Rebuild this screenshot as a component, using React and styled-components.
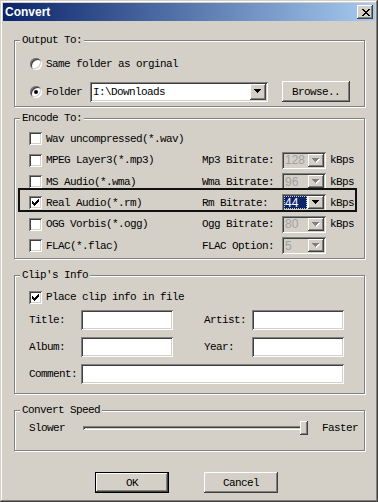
import React from "react"
import styled, { createGlobalStyle } from "styled-components"

const GlobalStyle = createGlobalStyle`
  html, body {
    margin: 0;
    padding: 0;
    background: #d4d0c8;
  }
  body {
    font-family: "Liberation Mono", "DejaVu Sans Mono", monospace;
    font-size: 11px;
    letter-spacing: -0.6px;
    color: #000;
  }
  * { box-sizing: border-box; }
`

const raised = `
  box-shadow: inset -1px -1px 0 #404040, inset 1px 1px 0 #fff,
    inset -2px -2px 0 #808080, inset 2px 2px 0 #d4d0c8;
`
const sunken = `
  box-shadow: inset 1px 1px 0 #808080, inset -1px -1px 0 #fff,
    inset 2px 2px 0 #404040, inset -2px -2px 0 #d4d0c8;
`

const formats = [
    { label: "Wav uncompressed(*.wav)", h: 21 },
    { label: "MPEG Layer3(*.mp3)", option: "Mp3 Bitrate:", value: "128", unit: "kBps", h: 22 },
    { label: "MS Audio(*.wma)", option: "Wma Bitrate:", value: "96", unit: "kBps", h: 21 },
    { label: "Real Audio(*.rm)", option: "Rm Bitrate:", value: "44", unit: "kBps", checked: true, h: 21 },
    { label: "OGG Vorbis(*.ogg)", option: "Ogg Bitrate:", value: "80", unit: "kBps", h: 22 },
    { label: "FLAC(*.flac)", option: "FLAC Option:", value: "5", h: 21 },
]

const CheckMark = () => (
    <svg width="7" height="7" viewBox="0 0 7 7" shapeRendering="crispEdges">
        <path d="M6 0h1v1h-1z M5 1h2v1h-2z M0 2h1v1h-1z M4 2h3v1h-3z M0 3h2v1h-2z M3 3h3v1h-3z M0 4h5v1h-5z M1 5h3v1h-3z M2 6h1v1h-1z" fill="#000" />
    </svg>
)

const Arrow = ({ disabled }) => (
    <svg width="8" height="5" viewBox="0 0 8 5" shapeRendering="crispEdges">
        {disabled && <path d="M1 1h7v1h-7z M2 2h5v1h-5z M3 3h3v1h-3z M4 4h1v1h-1z" fill="#fff" />}
        <path d="M0 0h7v1h-7z M1 1h5v1h-5z M2 2h3v1h-3z M3 3h1v1h-1z" fill={disabled ? "#808080" : "#000"} />
    </svg>
)

const CloseGlyph = () => (
    <svg width="8" height="7" viewBox="0 0 8 7" shapeRendering="crispEdges">
        <path d="M0 0h2v1h-2z M6 0h2v1h-2z M1 1h2v1h-2z M5 1h2v1h-2z M2 2h4v1h-4z M3 3h2v1h-2z M2 4h4v1h-4z M1 5h2v1h-2z M5 5h2v1h-2z M0 6h2v1h-2z M6 6h2v1h-2z" fill="#000" />
    </svg>
)

const App = () => {
    return (
        <>
            <GlobalStyle />
            <Window>
                <TitleBar>
                    <Title>Convert</Title>
                    <CloseButton><CloseGlyph /></CloseButton>
                </TitleBar>
                <Body>
                    <Group $top={13}>
                        <Legend>Output To:</Legend>
                        <OutputBody>
                            <Line $h={20}>
                                <Radio />
                                <span>Same folder as orginal</span>
                            </Line>
                            <Line $h={21}>
                                <Radio $on />
                                <FieldLabel $w={44}>Folder</FieldLabel>
                                <Combo $w={178} $h={20}>
                                    <ComboText $mono>I:\Downloads</ComboText>
                                    <DropButton><Arrow /></DropButton>
                                </Combo>
                                <Button $w={68} style={{ marginLeft: 14 }}>Browse..</Button>
                            </Line>
                        </OutputBody>
                    </Group>

                    <Group $top={5}>
                        <Legend>Encode To:</Legend>
                        <EncodeBody>
                            {formats.map((f, i) => (
                                <FormatRow key={i} $h={f.h}>
                                    <Line>
                                        <CheckBox>{f.checked && <CheckMark />}</CheckBox>
                                        <span>{f.label}</span>
                                    </Line>
                                    <span>{f.option}</span>
                                    {f.value && (
                                        <Combo $w={44} $h={17} $disabled={!f.checked}>
                                            <ComboText $disabled={!f.checked} $selected={f.checked}>{f.value}</ComboText>
                                            <DropButton><Arrow disabled={!f.checked} /></DropButton>
                                        </Combo>
                                    )}
                                    <span>{f.unit}</span>
                                    {f.checked && <Highlight />}
                                </FormatRow>
                            ))}
                        </EncodeBody>
                    </Group>

                    <Group $top={10}>
                        <Legend>Clip's Info</Legend>
                        <ClipBody>
                            <Line $h={20}>
                                <CheckBox><CheckMark /></CheckBox>
                                <span>Place clip info in file</span>
                            </Line>
                            <ClipGrid>
                                <span>Title:</span>
                                <TextInput />
                                <span />
                                <span>Artist:</span>
                                <TextInput />
                                <span>Album:</span>
                                <TextInput />
                                <span />
                                <span>Year:</span>
                                <TextInput />
                                <span>Comment:</span>
                                <TextInput $wide />
                            </ClipGrid>
                        </ClipBody>
                    </Group>

                    <Group $top={10}>
                        <Legend>Convert Speed</Legend>
                        <SpeedBody>
                            <FieldLabel $w={54}>Slower</FieldLabel>
                            <Track>
                                <Thumb />
                            </Track>
                            <FieldLabel style={{ marginLeft: 14 }}>Faster</FieldLabel>
                        </SpeedBody>
                    </Group>

                    <ButtonRow>
                        <Button $w={74} $h={21} $default>OK</Button>
                        <Button $w={74} $h={21}>Cancel</Button>
                    </ButtonRow>
                </Body>
            </Window>
        </>
    )
}

const Window = styled.div`
    width: 378px;
    height: 502px;
    padding: 3px;
    background: #d4d0c8;
    box-shadow: inset -1px -1px 0 #404040, inset 1px 1px 0 #d4d0c8,
        inset -2px -2px 0 #808080, inset 2px 2px 0 #fff;
    display: flex;
    flex-direction: column;
`

const TitleBar = styled.div`
    height: 18px;
    flex: none;
    display: flex;
    align-items: center;
    justify-content: space-between;
    padding: 0 2px 0 2px;
    background: linear-gradient(to right, #0a246a, #a6caf0);
`

const Title = styled.span`
    font-family: "Liberation Sans", Arial, sans-serif;
    font-weight: 700;
    font-size: 12px;
    letter-spacing: 0;
    color: #fff;
`

const CloseButton = styled.div`
    width: 16px;
    height: 14px;
    display: flex;
    align-items: center;
    justify-content: center;
    padding-left: 1px;
    background: #d4d0c8;
    ${raised}
`

const Body = styled.div`
    display: flex;
    flex-direction: column;
    padding-left: 11px;
`

const Group = styled.fieldset`
    margin: ${p => p.$top}px 0 0 0;
    padding: 0;
    width: 351px;
    min-width: 0;
    border: 1px solid #808080;
    box-shadow: 1px 1px 0 #fff, inset 1px 1px 0 #fff;
`

const Legend = styled.legend`
    margin-left: 5px;
    padding: 0 2px;
    height: 12px;
    line-height: 12px;
    background: #d4d0c8;
`

const OutputBody = styled.div`
    display: flex;
    flex-direction: column;
    gap: 7px;
    padding: 8px 0 4px 15px;
`

const Line = styled.div`
    display: flex;
    align-items: center;
    height: ${p => (p.$h ? p.$h + "px" : "auto")};
    line-height: 12px;
    white-space: nowrap;
`

const FieldLabel = styled.span`
    width: ${p => (p.$w ? p.$w + "px" : "auto")};
    flex: none;
`

const Radio = styled.span`
    position: relative;
    width: 12px;
    height: 12px;
    flex: none;
    margin-right: 4px;
    border-radius: 50%;
    background: #fff;
    box-shadow: inset 1px 1px 0 #808080, inset -1px -1px 0 #fff,
        inset 2px 2px 0 #404040, inset -2px -2px 0 #d4d0c8;
    &::after {
        content: "";
        display: ${p => (p.$on ? "block" : "none")};
        position: absolute;
        left: 4px;
        top: 4px;
        width: 4px;
        height: 4px;
        border-radius: 50%;
        background: #000;
    }
`

const CheckBox = styled.span`
    width: 13px;
    height: 13px;
    flex: none;
    margin-right: 4px;
    display: flex;
    align-items: center;
    justify-content: center;
    background: #fff;
    ${sunken}
`

const Combo = styled.div`
    width: ${p => p.$w}px;
    height: ${p => p.$h}px;
    flex: none;
    display: flex;
    padding: 2px;
    background: ${p => (p.$disabled ? "#d4d0c8" : "#fff")};
    ${sunken}
`

const ComboText = styled.div`
    flex: 1;
    display: flex;
    align-items: center;
    margin-right: ${p => (p.$selected ? "1px" : "0")};
    padding-left: ${p => (p.$selected ? "1px" : "1px")};
    font-family: ${p => (p.$mono ? `"Liberation Mono", monospace` : `"Liberation Sans", Arial, sans-serif`)};
    font-size: ${p => (p.$mono ? "11px" : "12px")};
    letter-spacing: ${p => (p.$mono ? "-0.6px" : "0")};
    color: ${p => (p.$disabled ? "#a0a0a0" : p.$selected ? "#fff" : "#000")};
    background: ${p => (p.$selected ? "#0a246a" : "transparent")};
    outline: ${p => (p.$selected ? "1px dotted #d4d0c8" : "none")};
    outline-offset: -1px;
`

const DropButton = styled.div`
    width: 16px;
    flex: none;
    display: flex;
    align-items: center;
    justify-content: center;
    background: #d4d0c8;
    ${raised}
`

const Button = styled.div`
    width: ${p => p.$w}px;
    height: ${p => (p.$h ? p.$h : 21)}px;
    flex: none;
    display: flex;
    align-items: center;
    justify-content: center;
    background: #d4d0c8;
    ${p =>
        p.$default
            ? `box-shadow: inset 0 0 0 1px #000, inset -2px -2px 0 #404040, inset 2px 2px 0 #fff, inset -3px -3px 0 #808080;`
            : raised}
`

const EncodeBody = styled.div`
    padding: 4px 0 2px 14px;
`

const FormatRow = styled.div`
    position: relative;
    height: ${p => p.$h}px;
    display: grid;
    grid-template-columns: 173px 80px 44px auto;
    column-gap: 0;
    align-items: center;
    white-space: nowrap;
    line-height: 12px;
    & > span:last-of-type {
        padding-left: 4px;
    }
`

const Highlight = styled.div`
    position: absolute;
    left: -11px;
    top: -4px;
    width: 339px;
    height: 24px;
    border: 2px solid #111;
    pointer-events: none;
`

const ClipBody = styled.div`
    padding: 6px 0 9px 14px;
`

const ClipGrid = styled.div`
    display: grid;
    grid-template-columns: 52px 92px 31px 48px 92px;
    grid-template-rows: 20px 20px 20px;
    row-gap: 7px;
    align-items: center;
    margin-top: 3px;
    line-height: 12px;
    white-space: nowrap;
`

const TextInput = styled.div`
    height: 20px;
    background: #fff;
    ${sunken}
    grid-column: ${p => (p.$wide ? "2 / 6" : "auto")};
`

const SpeedBody = styled.div`
    display: flex;
    align-items: center;
    height: 34px;
    padding: 5px 0 15px 14px;
    line-height: 12px;
`

const Track = styled.div`
    position: relative;
    width: 225px;
    height: 4px;
    flex: none;
    margin-top: -1px;
    box-shadow: inset 1px 1px 0 #808080, inset -1px -1px 0 #fff,
        inset 2px 2px 0 #404040, inset -2px -2px 0 #d4d0c8;
`

const Thumb = styled.div`
    position: absolute;
    right: 0;
    top: -5px;
    width: 8px;
    height: 14px;
    background: #d4d0c8;
    ${raised}
`

const ButtonRow = styled.div`
    display: flex;
    gap: 35px;
    margin-top: 21px;
    padding-left: 81px;
`

export default App
